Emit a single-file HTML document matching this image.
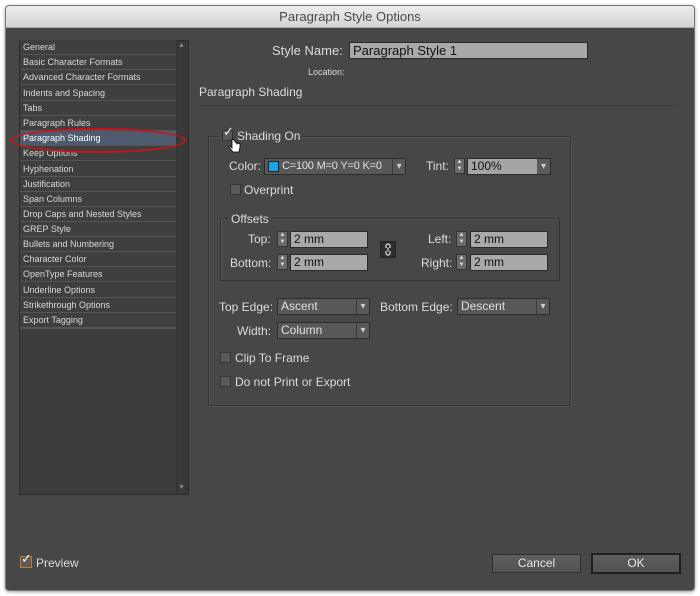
<!DOCTYPE html>
<html><head><style>
*{margin:0;padding:0;box-sizing:border-box}
body{width:700px;height:596px;background:#fff;position:relative;overflow:hidden;font-family:"Liberation Sans",sans-serif;color:#dcdcdc}
.a{position:absolute;white-space:nowrap}
#win{position:absolute;left:5px;top:5px;width:690px;height:586px;background:#474747;border:1px solid #777;border-radius:4px;overflow:hidden;box-shadow:0 1px 3px rgba(0,0,0,.4)}
#title{position:absolute;left:0;top:0;width:100%;height:22px;background:linear-gradient(#ececec,#d4d4d4);border-bottom:1px solid #aaa;text-align:center;font-size:13px;line-height:22px;color:#4a4a4a}
.row{position:absolute;left:20px;width:156px;height:15px;background:#3f3f3f;border-bottom:1px solid #555;font-size:9px;line-height:14px;padding-left:3px;color:#d8d8d8}
.inp{position:absolute;background:#a9a9a9;border:1px solid #2a2a2a;color:#111;font-size:12px;line-height:15px;padding-left:3px}
.dd{position:absolute;background:#585858;border:1px solid #2b2b2b;font-size:12px;line-height:15px;padding-left:3px;color:#e0e0e0;overflow:hidden}
.dd:after{content:"▾";position:absolute;right:0;top:0;width:12px;height:100%;border-left:1px solid #3a3a3a;background:#585858;font-size:10px;text-align:center;color:#ccc}
.cb{position:absolute;width:11px;height:11px;background:#5a5a5a;border:1px solid #333}
.sp{position:absolute;width:11px;height:16px;background:#6a6a6a;border:1px solid #333;font-size:6px;line-height:7px;text-align:center;color:#ddd}
.lbl{position:absolute;font-size:12px;white-space:nowrap}
.btn{position:absolute;height:19px;background:linear-gradient(#5e5e5e,#525252);border:1px solid #2d2d2d;font-size:12px;line-height:17px;text-align:center;color:#e6e6e6}
</style></head><body>
<div id="win">
<div id="title">Paragraph Style Options</div>
</div>
<div class="a" style="left:19px;top:40px;width:170px;height:455px;background:#3d3d3d;border:1px solid #2c2c2c"></div>
<div class="a" style="left:176px;top:41px;width:12px;height:453px;background:#393939;border-left:1px solid #333"></div>
<div class="a" style="left:178px;top:42px;font-size:7px;color:#888">▲</div>
<div class="a" style="left:178px;top:484px;font-size:7px;color:#888">▼</div>
<div class="row" style="top:40px">General</div>
<div class="row" style="top:55px">Basic Character Formats</div>
<div class="row" style="top:70px">Advanced Character Formats</div>
<div class="row" style="top:86px">Indents and Spacing</div>
<div class="row" style="top:101px">Tabs</div>
<div class="row" style="top:116px">Paragraph Rules</div>
<div class="row" style="top:131px;background:#4e5a6d;color:#fff">Paragraph Shading</div>
<div class="row" style="top:146px">Keep Options</div>
<div class="row" style="top:162px">Hyphenation</div>
<div class="row" style="top:177px">Justification</div>
<div class="row" style="top:192px">Span Columns</div>
<div class="row" style="top:207px">Drop Caps and Nested Styles</div>
<div class="row" style="top:222px">GREP Style</div>
<div class="row" style="top:237px">Bullets and Numbering</div>
<div class="row" style="top:252px">Character Color</div>
<div class="row" style="top:267px">OpenType Features</div>
<div class="row" style="top:283px">Underline Options</div>
<div class="row" style="top:298px">Strikethrough Options</div>
<div class="row" style="top:313px">Export Tagging</div>
<div class="a" style="left:20px;top:328px;width:156px;height:1px;background:#555"></div>
<div class="a" style="left:10px;top:128px;width:176px;height:25px;border:2px solid #c8141c;border-radius:50%"></div>

<div class="lbl" style="left:272px;top:43px;font-size:13px">Style Name:</div>
<div class="inp" style="left:349px;top:42px;width:239px;height:17px;font-size:13px">Paragraph Style 1</div>
<div class="lbl" style="left:308px;top:67px;font-size:9px">Location:</div>
<div class="lbl" style="left:199px;top:85px;font-size:12px">Paragraph Shading</div>
<div class="a" style="left:199px;top:105px;width:478px;height:1px;background:#5e5e5e;border-bottom:1px solid #383838"></div>

<div class="a" style="left:208px;top:136px;width:363px;height:270px;border:1px solid #333;box-shadow:inset 1px 1px 0 #555,1px 1px 0 #555"></div>
<div class="a" style="left:219px;top:128px;width:80px;height:14px;background:#474747"></div>
<div class="cb" style="left:222px;top:130px"></div>
<div class="a" style="left:223px;top:124px;font-size:13px;color:#eee">✓</div>
<div class="lbl" style="left:237px;top:129px;font-size:12px">Shading On</div>
<svg class="a" style="left:228px;top:138px" width="14" height="16" viewBox="0 0 14 16"><path d="M4 1v9l-2-2-1 1 4 5h6l1-5v-3l-2-1-1 1v-1l-2-1v-1l-1-1z" fill="#fff" stroke="#000" stroke-width=".8"/></svg>

<div class="lbl" style="left:229px;top:159px">Color:</div>
<div class="dd" style="left:264px;top:158px;width:142px;height:17px;padding-left:17px;font-size:11px;letter-spacing:-0.2px">C=100 M=0 Y=0 K=0</div>
<div class="a" style="left:268px;top:161px;width:11px;height:11px;background:#1aa5e6;border:1px solid #222"></div>
<div class="lbl" style="left:426px;top:159px">Tint:</div>
<div class="sp" style="left:454px;top:158px">▲<br>▼</div>
<div class="inp" style="left:467px;top:158px;width:84px;height:17px;background:#a5a5a5">100%</div>
<div class="a" style="left:537px;top:159px;width:13px;height:15px;background:#5a5a5a;font-size:10px;text-align:center;line-height:15px;color:#ccc">▾</div>
<div class="cb" style="left:230px;top:184px"></div>
<div class="lbl" style="left:244px;top:183px">Overprint</div>

<div class="a" style="left:220px;top:218px;width:340px;height:63px;border:1px solid #333;box-shadow:inset 1px 1px 0 #555"></div>
<div class="a" style="left:228px;top:211px;width:44px;height:14px;background:#474747"></div>
<div class="lbl" style="left:231px;top:212px">Offsets</div>
<div class="lbl" style="left:248px;top:232px">Top:</div>
<div class="sp" style="left:277px;top:231px">▲<br>▼</div>
<div class="inp" style="left:290px;top:231px;width:78px;height:17px">2 mm</div>
<div class="lbl" style="left:230px;top:256px">Bottom:</div>
<div class="sp" style="left:277px;top:254px">▲<br>▼</div>
<div class="inp" style="left:290px;top:254px;width:78px;height:17px">2 mm</div>
<div class="a" style="left:380px;top:241px;width:16px;height:17px;background:#2f2f2f;border:1px solid #222"></div>
<svg class="a" style="left:383px;top:243px" width="10" height="13" viewBox="0 0 10 13"><path d="M3 5V3a2 2 0 0 1 4 0v2M3 8v2a2 2 0 0 0 4 0V8M5 4.5v4" fill="none" stroke="#ddd" stroke-width="1.2"/></svg>
<div class="lbl" style="left:428px;top:232px">Left:</div>
<div class="sp" style="left:456px;top:231px">▲<br>▼</div>
<div class="inp" style="left:470px;top:231px;width:78px;height:17px">2 mm</div>
<div class="lbl" style="left:421px;top:256px">Right:</div>
<div class="sp" style="left:456px;top:254px">▲<br>▼</div>
<div class="inp" style="left:470px;top:254px;width:78px;height:17px">2 mm</div>

<div class="lbl" style="left:219px;top:300px">Top Edge:</div>
<div class="dd" style="left:277px;top:298px;width:93px;height:17px">Ascent</div>
<div class="lbl" style="left:380px;top:300px">Bottom Edge:</div>
<div class="dd" style="left:457px;top:298px;width:93px;height:17px">Descent</div>
<div class="lbl" style="left:237px;top:324px">Width:</div>
<div class="dd" style="left:277px;top:322px;width:93px;height:17px">Column</div>
<div class="cb" style="left:220px;top:352px"></div>
<div class="lbl" style="left:235px;top:351px">Clip To Frame</div>
<div class="cb" style="left:220px;top:376px"></div>
<div class="lbl" style="left:235px;top:375px">Do not Print or Export</div>

<div class="a" style="left:20px;top:556px;width:12px;height:12px;background:#5a5a5a;border:1px solid #c07a2a"></div>
<div class="a" style="left:21px;top:551px;font-size:13px;color:#fff">✓</div>
<div class="lbl" style="left:36px;top:556px">Preview</div>
<div class="btn" style="left:492px;top:554px;width:89px">Cancel</div>
<div class="btn" style="left:591px;top:553px;width:90px;height:21px;border:2px solid #1f1f1f">OK</div>
</body></html>
